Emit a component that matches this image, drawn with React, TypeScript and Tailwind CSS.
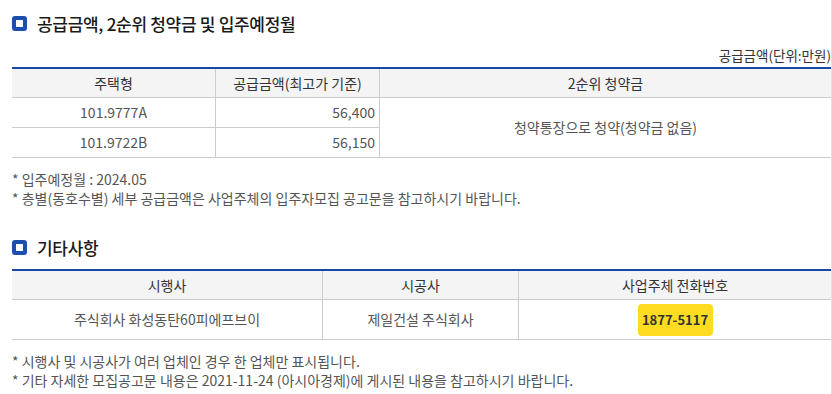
const font = { fontFamily: '"Noto Sans CJK KR", "Noto Sans", sans-serif' }

function SectionTitle({ children, className }: { children: React.ReactNode; className: string }) {
  return (
    <div className={`flex items-center gap-[10px] ${className}`}>
      <span className="box-border h-[15px] w-[15px] rounded-[3px] border-[4px] border-[#1a4fae] bg-white" />
      <h2 className="text-[17px] font-medium leading-none tracking-[-0.3px] text-[#1a1a1a]">{children}</h2>
    </div>
  )
}

const head = 'flex h-[29px] items-center justify-center border-b border-[#cccccc] bg-[#f4f4f4] text-[#333]'
const cell = 'flex items-center border-b border-[#cccccc] text-[#555]'

export default function App() {
  return (
    <div
      className="min-h-[394px] w-[832px] border-r border-[#e2e2e2] bg-white pl-[12px] text-[14px] leading-[19px]"
      style={font}
    >
      {/* 공급금액 */}
      <SectionTitle className="h-[46px]">공급금액, 2순위 청약금 및 입주예정월</SectionTitle>
      <p className="mb-[3px] h-[18px] text-right text-[13.5px] leading-[18px] text-[#333]">공급금액(단위:만원)</p>

      <div className="grid grid-cols-[204px_164px_1fr] border-t-2 border-[#1549a8]">
        <div className={`${head} border-r`}>주택형</div>
        <div className={`${head} border-r`}>공급금액(최고가 기준)</div>
        <div className={head}>2순위 청약금</div>

        <div className={`${cell} h-[30px] justify-center border-r`}>101.9777A</div>
        <div className={`${cell} h-[30px] justify-end border-r pr-[4px]`}>56,400</div>
        <div className={`${cell} row-span-2 justify-center`}>청약통장으로 청약(청약금 없음)</div>

        <div className={`${cell} h-[30px] justify-center border-r`}>101.9722B</div>
        <div className={`${cell} h-[30px] justify-end border-r pr-[4px]`}>56,150</div>
      </div>

      <div className="mt-[12px] text-[#555]">
        <p>* 입주예정월 : 2024.05</p>
        <p>* 층별(동호수별) 세부 공급금액은 사업주체의 입주자모집 공고문을 참고하시기 바랍니다.</p>
      </div>

      {/* 기타사항 */}
      <SectionTitle className="mt-[17px] h-[44px]">기타사항</SectionTitle>

      <div className="grid grid-cols-[311px_196px_1fr] border-t-2 border-[#1549a8]">
        <div className={`${head} border-r`}>시행사</div>
        <div className={`${head} border-r`}>시공사</div>
        <div className={head}>사업주체 전화번호</div>

        <div className={`${cell} h-[40px] justify-center border-r`}>주식회사 화성동탄60피에프브이</div>
        <div className={`${cell} h-[40px] justify-center border-r`}>제일건설 주식회사</div>
        <div className={`${cell} h-[40px] justify-center`}>
          <span className="flex h-[32px] w-[75px] items-center justify-center rounded-[4px] bg-[#fddc22] text-[13px] font-bold text-[#333]">
            1877-5117
          </span>
        </div>
      </div>

      <div className="mt-[12px] text-[#555]">
        <p>* 시행사 및 시공사가 여러 업체인 경우 한 업체만 표시됩니다.</p>
        <p>* 기타 자세한 모집공고문 내용은 2021-11-24 (아시아경제)에 게시된 내용을 참고하시기 바랍니다.</p>
      </div>
    </div>
  )
}
